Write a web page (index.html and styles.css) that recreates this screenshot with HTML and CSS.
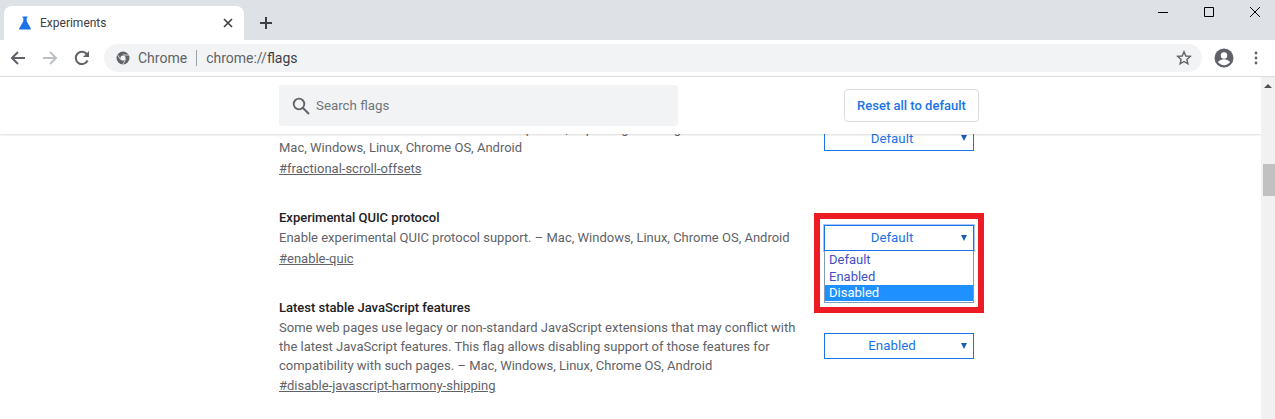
FILE: index.html
```html
<!DOCTYPE html>
<html lang="en">
<head>
    <meta charset="UTF-8">
    <title>Experiments</title>
    <link rel="stylesheet" href="styles.css">
</head>
<body>
    <div class="tab-strip">
        <div class="tab">
            <svg class="tab-icon" width="16" height="16" viewBox="0 0 16 16"><path fill="#1a73e8" d="M5.5 1.5h5v1.2h-.8v3.6l4.100 7.200c.3.6 0 1-.6 1H2.800c-.6 0-.9-.4-.6-1l4.100-7.200V2.700h-.8z"/></svg>
            <span class="tab-title">Experiments</span>
            <svg class="tab-close" width="10" height="10" viewBox="0 0 10 10"><path stroke="#3c4043" stroke-width="1.6" d="M1 1l8 8M9 1l-8 8"/></svg>
        </div>
        <svg class="new-tab" width="14" height="14" viewBox="0 0 14 14"><path stroke="#3c4043" stroke-width="2" d="M7 1v12M1 7h12"/></svg>
        <div class="window-controls">
            <svg width="12" height="12" viewBox="0 0 12 12"><path stroke="#000" stroke-width="1" d="M1 6.5h10"/></svg>
            <svg width="12" height="12" viewBox="0 0 12 12"><path fill="none" stroke="#000" stroke-width="1" d="M1.5 1.5h9v9h-9z"/></svg>
            <svg width="12" height="12" viewBox="0 0 12 12"><path stroke="#000" stroke-width="1" d="M1 1l10 10M11 1L1 11"/></svg>
        </div>
    </div>

    <div class="toolbar">
        <svg class="nav" width="16" height="16" viewBox="0 0 16 16"><path fill="none" stroke="#5f6368" stroke-width="2" d="M15 8H2M8 2L2 8l6 6"/></svg>
        <svg class="nav" width="16" height="16" viewBox="0 0 16 16"><path fill="none" stroke="#bdc1c6" stroke-width="2" d="M1 8h13M8 2l6 6-6 6"/></svg>
        <svg class="nav" width="16" height="16" viewBox="0 0 16 16"><path fill="none" stroke="#5f6368" stroke-width="2" d="M13.6 10.5A6.200 6.200 0 1 1 12.800 4"/><path fill="#5f6368" d="M15 1v6H9z"/></svg>
        <div class="omnibox">
            <svg class="site-icon" width="14" height="14" viewBox="0 0 14 14"><circle cx="7" cy="7" r="6.5" fill="#5f6368"/><circle cx="7" cy="7" r="2.6" fill="#f1f3f4"/><path stroke="#f1f3f4" stroke-width=".8" d="M7 4h5.800M4.400 8.500L1.700 3.800M9.600 8.500l-2.900 5"/></svg>
            <span class="origin">Chrome</span>
            <span class="divider"></span>
            <span class="url">chrome://<span class="url-host">flags</span></span>
            <svg class="star" width="16" height="16" viewBox="0 0 16 16"><path fill="none" stroke="#5f6368" stroke-width="1.4" d="M8 1.800l1.800 4.200 4.500.4-3.400 3 1 4.400L8 11.500l-3.900 2.300 1-4.400-3.400-3 4.500-.4z"/></svg>
        </div>
        <svg class="avatar" width="20" height="20" viewBox="0 0 20 20"><circle cx="10" cy="10" r="9.5" fill="#5f6368"/><circle cx="10" cy="7.5" r="3.2" fill="#fff"/><path fill="#fff" d="M3.900 14c1.500-2 4-2.800 6.100-2.800s4.600.8 6.100 2.800c-1.400 2-3.600 3.200-6.100 3.200s-4.700-1.200-6.100-3.200z"/></svg>
        <svg class="menu" width="4" height="14" viewBox="0 0 4 14"><circle cx="2" cy="2" r="1.4" fill="#5f6368"/><circle cx="2" cy="7" r="1.4" fill="#5f6368"/><circle cx="2" cy="12" r="1.4" fill="#5f6368"/></svg>
    </div>

    <div class="viewport">
        <div class="page">
            <div class="flags-header">
                <div class="search-box">
                    <svg width="18" height="18" viewBox="0 0 18 18"><circle cx="7" cy="7" r="5.3" fill="none" stroke="#5f6368" stroke-width="1.8"/><path stroke="#5f6368" stroke-width="2" d="M11 11l6 6"/></svg>
                    <span>Search flags</span>
                </div>
                <div class="reset-btn">Reset all to default</div>
            </div>

            <div class="flags">
                <div class="flag flag-first">
                    <div class="flag-text">
                        <p class="flag-desc">Enables fractional scroll offsets in the compositor, improving scrolling<br>
                        Mac, Windows, Linux, Chrome OS, Android</p>
                        <a class="flag-link">#fractional-scroll-offsets</a>
                    </div>
                    <div class="select"><span>Default</span></div>
                </div>

                <div class="flag flag-quic">
                    <div class="flag-text">
                        <h3 class="flag-name">Experimental QUIC protocol</h3>
                        <p class="flag-desc">Enable experimental QUIC protocol support. – Mac, Windows, Linux, Chrome OS, Android</p>
                        <a class="flag-link">#enable-quic</a>
                    </div>
                    <div class="select-wrap">
                        <div class="select select-open"><span>Default</span></div>
                        <ul class="options">
                            <li>Default</li>
                            <li>Enabled</li>
                            <li class="selected">Disabled</li>
                        </ul>
                        <div class="highlight"></div>
                    </div>
                </div>

                <div class="flag flag-js">
                    <div class="flag-text">
                        <h3 class="flag-name">Latest stable JavaScript features</h3>
                        <p class="flag-desc">Some web pages use legacy or non-standard JavaScript extensions that may conflict with the latest JavaScript features. This flag allows disabling support of those features for compatibility with such pages. – Mac, Windows, Linux, Chrome OS, Android</p>
                        <a class="flag-link">#disable-javascript-harmony-shipping</a>
                    </div>
                    <div class="select"><span>Enabled</span></div>
                </div>
            </div>
        </div>

        <div class="scrollbar">
            <div class="scroll-up"></div>
            <div class="scroll-thumb"></div>
        </div>
    </div>
</body>
</html>
```

FILE: styles.css
```css
html, body {
    margin: 0;
    padding: 0;
    height: 419px;
    overflow: hidden;
    background: #fff;
    font-family: Roboto, "Liberation Sans", sans-serif;
}

/* tab strip */
.tab-strip {
    display: flex;
    align-items: flex-end;
    height: 40px;
    background: #dee1e6;
    position: relative;
}

.tab {
    display: flex;
    align-items: center;
    width: 240px;
    height: 34px;
    margin-left: 4px;
    background: #fff;
    border-radius: 8px 8px 0 0;
    box-sizing: border-box;
    padding: 0 11px 1px 13px;
}

.tab-title {
    flex: 1;
    margin-left: 7px;
    font-size: 12px;
    color: #3c4043;
}

.new-tab {
    margin: 0 0 10px 15px;
}

.window-controls {
    position: absolute;
    top: 6px;
    right: 14px;
    display: flex;
    gap: 34px;
}

/* toolbar */
.toolbar {
    display: flex;
    align-items: center;
    height: 36px;
    background: #fff;
    border-bottom: 1px solid #dadce0;
    padding-left: 10px;
}

.nav {
    margin-right: 16px;
}

.omnibox {
    display: flex;
    align-items: center;
    width: 1098px;
    height: 28px;
    margin-left: -2px;
    background: #f1f3f4;
    border-radius: 14px;
    box-sizing: border-box;
    padding: 0 10px 0 12px;
    font-size: 14px;
}

.origin {
    margin-left: 8px;
    color: #5f6368;
}

.divider {
    width: 1px;
    height: 16px;
    margin: 0 9px;
    background: #9aa0a6;
}

.url {
    flex: 1;
    color: #5f6368;
}

.url-host {
    color: #3c4043;
}

.avatar {
    margin-left: 12px;
}

.menu {
    margin-left: 20px;
}

/* page */
.viewport {
    display: flex;
    height: 342px;
    overflow: hidden;
}

.page {
    flex: 1;
    position: relative;
    overflow: hidden;
}

.flags-header {
    position: absolute;
    top: 0;
    left: 0;
    right: 0;
    z-index: 2;
    display: flex;
    height: 57px;
    background: #fff;
    box-shadow: 0 1px 2px rgba(0, 0, 0, 0.15);
    padding: 8px 0 0 279px;
    box-sizing: border-box;
}

.search-box {
    display: flex;
    align-items: center;
    width: 399px;
    height: 41px;
    background: #f1f3f4;
    border-radius: 3px;
    box-sizing: border-box;
    padding-left: 13px;
    font-size: 13.3px;
    color: #70757a;
}

.search-box span {
    margin-left: 6px;
}

.reset-btn {
    width: 135px;
    height: 33px;
    margin: 4px 0 0 166px;
    border: 1px solid #dadce0;
    border-radius: 4px;
    box-sizing: border-box;
    text-align: center;
    line-height: 31px;
    font-size: 13px;
    font-weight: 500;
    color: #1a73e8;
}

.flags {
    padding: 0 0 0 279px;
    width: 695px;
    font-size: 13px;
    line-height: 19px;
    color: #5f6368;
}

.flag {
    display: flex;
    justify-content: space-between;
}

.flag-first {
    margin-top: 42px;
}

.flag-quic, .flag-js {
    margin-top: 29px;
}

.flag-text {
    width: 520px;
}

.flag-name {
    margin: 0;
    font-size: 13px;
    font-weight: 500;
    line-height: 20px;
    color: #202124;
}

.flag-desc {
    margin: 0;
}

.flag-link {
    display: block;
    margin-top: 2px;
    line-height: 20px;
    color: #5f6368;
    text-decoration: underline;
}

.flag-js .flag-link {
    margin-top: 1px;
}

.select {
    position: relative;
    width: 150px;
    height: 26px;
    margin-top: 6px;
    border: 1px solid #1a73e8;
    box-sizing: border-box;
    background: #fff;
    text-align: center;
    font-size: 13.3px;
    line-height: 24px;
    padding-right: 14px;
    color: #1a73e8;
}

.select::after {
    content: "";
    position: absolute;
    top: 9px;
    right: 6px;
    border-top: 6px solid #1a5fb4;
    border-left: 3px solid transparent;
    border-right: 3px solid transparent;
}

.flag-first .select {
    line-height: 26px;
}

.flag-js .select {
    margin-top: 35px;
}

.select-wrap {
    position: relative;
    width: 150px;
    margin-top: 17px;
}

.select-open {
    margin-top: 0;
    outline: 1px solid #a8c7fa;
}

/* the popup list hangs below the select, over the page */
.options {
    position: absolute;
    top: 26px;
    left: 0;
    width: 150px;
    height: 52px;
    margin: 0;
    padding: 1px 0 0;
    list-style: none;
    border: 1px solid #7f9db9;
    border-top: 0;
    box-sizing: border-box;
    line-height: 16px;
    font-size: 13px;
    color: #3f51c8;
    background: #fff;
}

.options li {
    padding-left: 4px;
    height: 16px;
}

.options li:first-child {
    height: 17px;
}

.options .selected {
    background: #1e90ff;
    color: #fff;
}

/* red annotation box round the open select */
.highlight {
    position: absolute;
    top: -12px;
    left: -10px;
    width: 170px;
    height: 100px;
    border: 6px solid #ed1c24;
    box-sizing: border-box;
    z-index: 1;
}

/* scrollbar */
.scrollbar {
    position: relative;
    width: 14px;
    background: #f1f1f1;
}

.scroll-up {
    width: 0;
    margin: 7px 0 0 3px;
    border-bottom: 4px solid #505050;
    border-left: 4px solid transparent;
    border-right: 4px solid transparent;
}

.scroll-thumb {
    width: 12px;
    height: 32px;
    margin: 76px 0 0 2px;
    background: #c1c1c1;
}
```
